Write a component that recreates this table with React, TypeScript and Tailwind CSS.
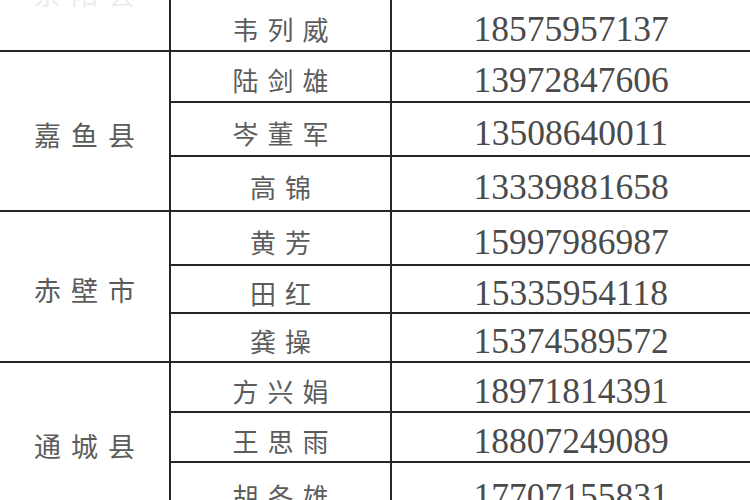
const groups = [
  { county: "崇阳县", faint: true, rows: [{ name: "韦列威", phone: "18575957137", h: "h-[52px]" }] },
  {
    county: "嘉鱼县",
    rows: [
      { name: "陆剑雄", phone: "13972847606", h: "h-[51px]" },
      { name: "岑董军", phone: "13508640011", h: "h-[54px]" },
      { name: "高锦", phone: "13339881658", h: "h-[55px]" },
    ],
  },
  {
    county: "赤壁市",
    rows: [
      { name: "黄芳", phone: "15997986987", h: "h-[54px]" },
      { name: "田红", phone: "15335954118", h: "h-[48px]" },
      { name: "龚操", phone: "15374589572", h: "h-[49px]" },
    ],
  },
  {
    county: "通城县",
    rows: [
      { name: "方兴娟", phone: "18971814391", h: "h-[50px]" },
      { name: "王思雨", phone: "18807249089", h: "h-[50px]" },
      { name: "胡冬雄", phone: "17707155831", h: "h-[60px]" },
    ],
  },
];

export default function App() {
  return (
    <div className="w-[750px] h-[500px] overflow-hidden bg-white">
      {groups.map((g) => (
        <div key={g.county} className="flex">
          {/* merged county cell */}
          <div
            className={
              "w-[171px] shrink-0 border-r-2 border-b-2 border-[#262626] flex justify-center overflow-hidden " +
              (g.faint ? "items-start" : "items-center pt-[8px]")
            }
          >
            <span
              className={
                "font-['Noto_Sans_CJK_SC',sans-serif] text-[27px] tracking-[10px] pl-[10px] " +
                (g.faint ? "-mt-[26px] text-[#ececec]" : "text-[#5c5c5c]")
              }
            >
              {g.county}
            </span>
          </div>
          <div className="flex-1 flex flex-col">
            {g.rows.map((r) => (
              <div key={r.phone} className={"flex border-b-2 border-[#262626] " + r.h}>
                <div className="w-[221px] shrink-0 border-r-2 border-[#262626] flex items-center justify-center pt-[6px]">
                  <span className="font-['Noto_Sans_CJK_SC',sans-serif] text-[26px] tracking-[9px] pl-[9px] text-[#5c5c5c]">
                    {r.name}
                  </span>
                </div>
                <div className="flex-1 flex items-center justify-center pt-[9px]">
                  <span className="font-['Liberation_Serif',serif] text-[35.5px] leading-none text-[#4a4a4a]">
                    {r.phone}
                  </span>
                </div>
              </div>
            ))}
          </div>
        </div>
      ))}
    </div>
  );
}
